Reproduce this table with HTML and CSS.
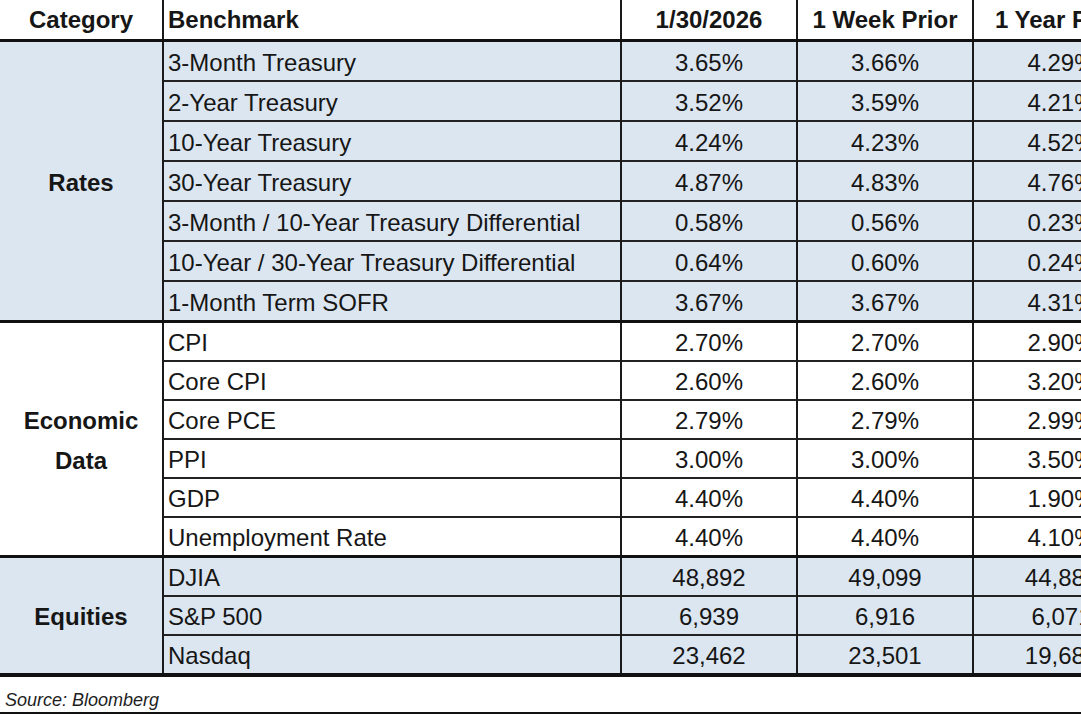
FILE: index.html
```html
<!DOCTYPE html>
<html>
<head>
<meta charset="utf-8">
<link rel="stylesheet" href="styles.css">
</head>
<body>
<div class="page">
  <table class="bench">
    <colgroup>
      <col class="c-cat"><col class="c-name"><col class="c-val"><col class="c-val"><col class="c-val">
    </colgroup>
    <thead>
      <tr class="head">
        <th class="cat">Category</th>
        <th class="name">Benchmark</th>
        <th>1/30/2026</th>
        <th>1 Week Prior</th>
        <th>1 Year Prior</th>
      </tr>
    </thead>
    <tbody class="sec blue rates">
      <tr><td class="cat" rowspan="7">Rates</td><td class="name">3-Month Treasury</td><td>3.65%</td><td>3.66%</td><td>4.29%</td></tr>
      <tr><td class="name">2-Year Treasury</td><td>3.52%</td><td>3.59%</td><td>4.21%</td></tr>
      <tr><td class="name">10-Year Treasury</td><td>4.24%</td><td>4.23%</td><td>4.52%</td></tr>
      <tr><td class="name">30-Year Treasury</td><td>4.87%</td><td>4.83%</td><td>4.76%</td></tr>
      <tr><td class="name">3-Month / 10-Year Treasury Differential</td><td>0.58%</td><td>0.56%</td><td>0.23%</td></tr>
      <tr><td class="name">10-Year / 30-Year Treasury Differential</td><td>0.64%</td><td>0.60%</td><td>0.24%</td></tr>
      <tr><td class="name">1-Month Term SOFR</td><td>3.67%</td><td>3.67%</td><td>4.31%</td></tr>
    </tbody>
    <tbody class="sec econ">
      <tr><td class="cat" rowspan="6">Economic<br>Data</td><td class="name">CPI</td><td>2.70%</td><td>2.70%</td><td>2.90%</td></tr>
      <tr><td class="name">Core CPI</td><td>2.60%</td><td>2.60%</td><td>3.20%</td></tr>
      <tr><td class="name">Core PCE</td><td>2.79%</td><td>2.79%</td><td>2.99%</td></tr>
      <tr><td class="name">PPI</td><td>3.00%</td><td>3.00%</td><td>3.50%</td></tr>
      <tr><td class="name">GDP</td><td>4.40%</td><td>4.40%</td><td>1.90%</td></tr>
      <tr><td class="name">Unemployment Rate</td><td>4.40%</td><td>4.40%</td><td>4.10%</td></tr>
    </tbody>
    <tbody class="sec blue equities">
      <tr><td class="cat" rowspan="3">Equities</td><td class="name">DJIA</td><td>48,892</td><td>49,099</td><td>44,882</td></tr>
      <tr><td class="name">S&amp;P 500</td><td>6,939</td><td>6,916</td><td>6,071</td></tr>
      <tr><td class="name">Nasdaq</td><td>23,462</td><td>23,501</td><td>19,683</td></tr>
    </tbody>
  </table>
  <div class="source">Source: Bloomberg</div>
</div>
</body>
</html>
```
FILE: styles.css
```css
html, body {
  margin: 0;
  padding: 0;
  overflow: hidden;
  background: #ffffff;
}

.page {
  width: 1081px;
  height: 715px;
  overflow: hidden;
  font-family: "Liberation Sans", Arial, sans-serif;
  color: #161616;
}

.bench {
  border-collapse: collapse;
  table-layout: fixed;
  width: 1149px;
  font-size: 24px;
}

.c-cat { width: 163px; }
.c-name { width: 458px; }
.c-val { width: 176px; }

.bench th,
.bench td {
  padding: 0;
  text-align: center;
  vertical-align: middle;
  line-height: 26px;
  border-left: 2px solid #1a1a1a;
  white-space: nowrap;
  overflow: hidden;
}

.bench th {
  font-weight: bold;
  height: 38px;
  border-bottom: 3px solid #111;
  padding-top: 1px;
}

.bench th.cat,
.bench td.cat {
  border-left: none;
  font-weight: bold;
}

.bench .name {
  text-align: left;
  padding-left: 4px;
}

.bench tbody td {
  border-top: 2px solid #222;
  padding-top: 3px;
}

.bench tbody tr:first-child td {
  border-top: 3px solid #111;
}

.bench tbody:last-child tr:last-child td,
.bench tbody:last-child td.cat {
  border-bottom: 4px solid #111;
}

.rates td { height: 35px; }
.econ td { height: 34px; }
.equities td { height: 34px; }

.bench td.cat {
  line-height: 40px;
}

.blue td {
  background: #dce6f1;
}

.source {
  border-bottom: 2px solid #111;
  font-style: italic;
  font-size: 18px;
  line-height: 20px;
  padding-left: 5px;
  padding-top: 13px;
  box-sizing: border-box;
  height: 37px;
  color: #1e1e1e;
}
```
